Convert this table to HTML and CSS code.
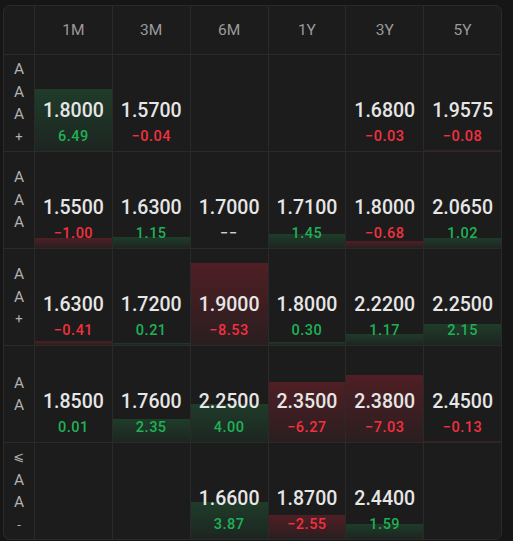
FILE: index.html
```html
<!doctype html>
<html>
<head>
    <title>Rate Matrix</title>
<link rel="stylesheet" href="styles.css">
</head>
<body>
    <div class="matrix">
        <div class="corner"></div>
        <div class="head">1M</div>
        <div class="head">3M</div>
        <div class="head">6M</div>
        <div class="head">1Y</div>
        <div class="head">3Y</div>
        <div class="head">5Y</div>

        <!-- AAA+ -->
        <div class="label"><span>A</span><span>A</span><span>A</span><span class="sym">+</span></div>
        <div class="cell"><div class="bar up" style="height:64.9%"></div><div class="rate">1.8000</div><div class="chg up">6.49</div></div>
        <div class="cell"><div class="bar down" style="height:0.4%"></div><div class="rate">1.5700</div><div class="chg down">−0.04</div></div>
        <div class="cell"></div>
        <div class="cell"></div>
        <div class="cell"><div class="bar down" style="height:0.3%"></div><div class="rate">1.6800</div><div class="chg down">−0.03</div></div>
        <div class="cell"><div class="bar down" style="height:0.8%"></div><div class="rate">1.9575</div><div class="chg down">−0.08</div></div>

        <!-- AAA -->
        <div class="label"><span>A</span><span>A</span><span>A</span></div>
        <div class="cell"><div class="bar down" style="height:10%"></div><div class="rate">1.5500</div><div class="chg down">−1.00</div></div>
        <div class="cell"><div class="bar up" style="height:11.5%"></div><div class="rate">1.6300</div><div class="chg up">1.15</div></div>
        <div class="cell"><div class="rate">1.7000</div><div class="chg none">−−</div></div>
        <div class="cell"><div class="bar up" style="height:14.5%"></div><div class="rate">1.7100</div><div class="chg up">1.45</div></div>
        <div class="cell"><div class="bar down" style="height:6.8%"></div><div class="rate">1.8000</div><div class="chg down">−0.68</div></div>
        <div class="cell"><div class="bar up" style="height:10.2%"></div><div class="rate">2.0650</div><div class="chg up">1.02</div></div>

        <!-- AA+ -->
        <div class="label"><span>A</span><span>A</span><span class="sym">+</span></div>
        <div class="cell"><div class="bar down" style="height:4.1%"></div><div class="rate">1.6300</div><div class="chg down">−0.41</div></div>
        <div class="cell"><div class="bar up" style="height:2.1%"></div><div class="rate">1.7200</div><div class="chg up">0.21</div></div>
        <div class="cell"><div class="bar down" style="height:85.3%"></div><div class="rate">1.9000</div><div class="chg down">−8.53</div></div>
        <div class="cell"><div class="bar up" style="height:3%"></div><div class="rate">1.8000</div><div class="chg up">0.30</div></div>
        <div class="cell"><div class="bar up" style="height:11.7%"></div><div class="rate">2.2200</div><div class="chg up">1.17</div></div>
        <div class="cell"><div class="bar up" style="height:21.5%"></div><div class="rate">2.2500</div><div class="chg up">2.15</div></div>

        <!-- AA -->
        <div class="label"><span>A</span><span>A</span></div>
        <div class="cell"><div class="bar up" style="height:0.1%"></div><div class="rate">1.8500</div><div class="chg up">0.01</div></div>
        <div class="cell"><div class="bar up" style="height:23.5%"></div><div class="rate">1.7600</div><div class="chg up">2.35</div></div>
        <div class="cell"><div class="bar up" style="height:40%"></div><div class="rate">2.2500</div><div class="chg up">4.00</div></div>
        <div class="cell"><div class="bar down" style="height:62.7%"></div><div class="rate">2.3500</div><div class="chg down">−6.27</div></div>
        <div class="cell"><div class="bar down" style="height:70.3%"></div><div class="rate">2.3800</div><div class="chg down">−7.03</div></div>
        <div class="cell"><div class="bar down" style="height:1.3%"></div><div class="rate">2.4500</div><div class="chg down">−0.13</div></div>

        <!-- <=AA- -->
        <div class="label"><span class="sym">⩽</span><span>A</span><span>A</span><span class="sym">-</span></div>
        <div class="cell"></div>
        <div class="cell"></div>
        <div class="cell"><div class="bar up" style="height:38.7%"></div><div class="rate">1.6600</div><div class="chg up">3.87</div></div>
        <div class="cell"><div class="bar down" style="height:25.5%"></div><div class="rate">1.8700</div><div class="chg down">−2.55</div></div>
        <div class="cell"><div class="bar up" style="height:15.9%"></div><div class="rate">2.4400</div><div class="chg up">1.59</div></div>
        <div class="cell"></div>
    </div>
</body>
</html>
```

FILE: styles.css
```css
body {
    margin: 0;
    padding: 5px 0 0 3px;
    background-color: #161616;
    font-family: "Roboto", "DejaVu Sans", sans-serif;
}
.matrix {
    width: 499px;
    box-sizing: border-box;
    display: grid;
    grid-template-columns: 30px repeat(6, 1fr);
    grid-template-rows: 48px repeat(5, 96px);
    gap: 1px;
    background-color: #2a2a2a;
    border: 1px solid #2a2a2a;
    border-radius: 7px;
    overflow: hidden;
}
.corner,
.head,
.label,
.cell {
    background-color: #1c1c1c;
}
.head {
    display: flex;
    align-items: center;
    justify-content: center;
    color: #9a9a9a;
    font-size: 15.5px;
}
.label {
    display: flex;
    flex-direction: column;
    align-items: center;
    justify-content: center;
    color: #b2b2b2;
    font-size: 15.5px;
    line-height: 22.5px;
}
.label .sym {
    font-size: 13px;
}
.cell {
    position: relative;
    display: flex;
    flex-direction: column;
    align-items: center;
    justify-content: flex-end;
    padding-bottom: 4px;
}
.bar {
    position: absolute;
    left: 0;
    right: 0;
    bottom: 0;
}
.bar.up {
    background: linear-gradient(to bottom, #1f3c2a, #1d2521);
}
.bar.down {
    background: linear-gradient(to bottom, #4f1f24, #2a1e20);
}
.rate {
    position: relative;
    color: #e6e6e6;
    font-size: 19.5px;
    font-weight: 500;
    line-height: 24px;
    margin-bottom: 4px;
}
.chg {
    position: relative;
    color: #cfcfcf;
    font-size: 14.5px;
    font-weight: 500;
    line-height: 20px;
    letter-spacing: 0.5px;
}
.chg.none {
    letter-spacing: 1px;
}
.chg.up {
    color: #1fb155;
}
.chg.down {
    color: #f2303f;
}
```
